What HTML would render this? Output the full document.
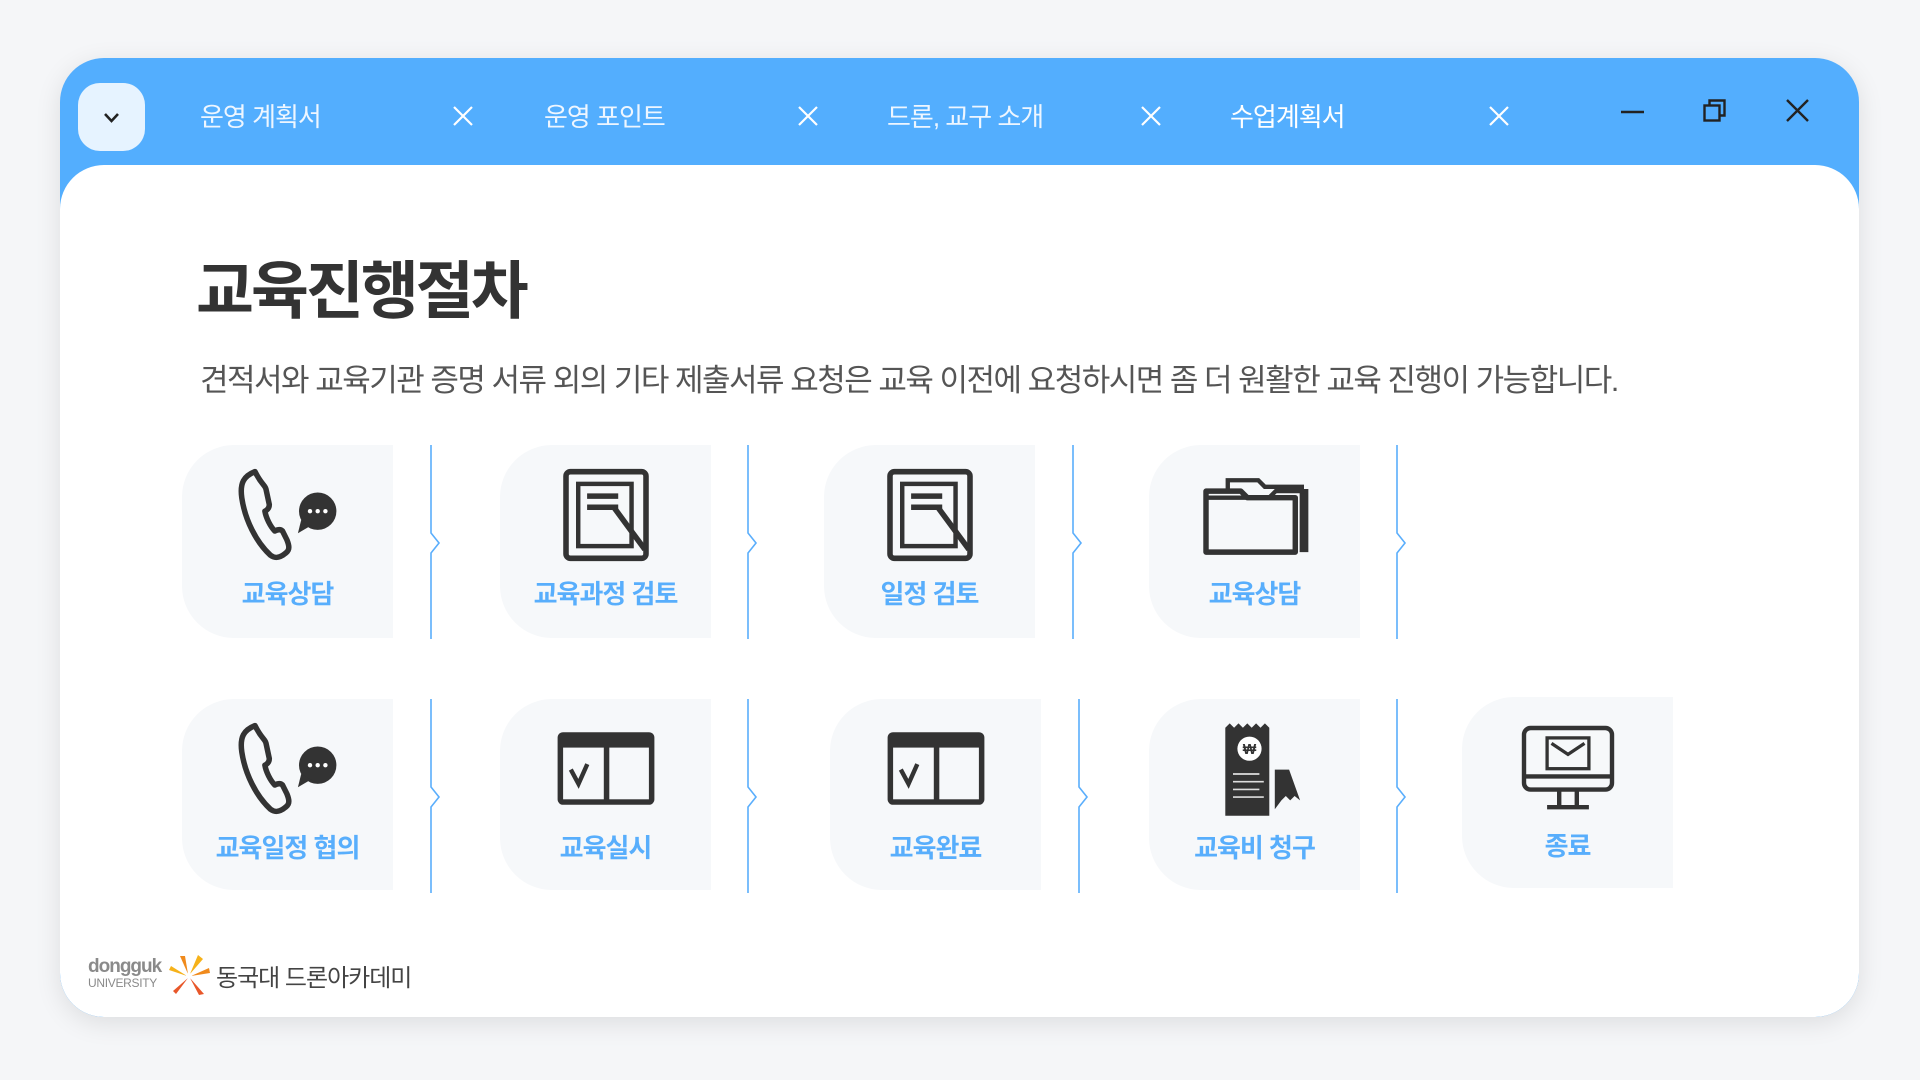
<!DOCTYPE html>
<html><head><meta charset="utf-8"><style>
*{margin:0;padding:0;box-sizing:border-box}
body{width:1920px;height:1080px;background:#f5f6f8;font-family:"Liberation Sans","Noto Sans CJK KR",sans-serif;position:relative;overflow:hidden}
.win{position:absolute;left:60px;top:58px;width:1799px;height:959px;background:#53aefe;border-radius:44px;box-shadow:0 6px 26px rgba(0,0,0,.10);overflow:hidden}
.body{position:absolute;left:0;top:107px;width:1799px;height:852px;background:#fff;border-radius:44px 44px 44px 44px}
.dd{position:absolute;left:18px;top:25px;width:67px;height:68px;border-radius:22px;background:#e6f3ff}
.tab{position:absolute;top:42px;color:#eef6ff;font-size:26px;line-height:34px;letter-spacing:-1px}
.x{position:absolute;top:47px}
.a{position:absolute}
.t{position:absolute;color:#3a3a3a}
.card{position:absolute;width:211px;height:193px;background:#f6f8fa;border-radius:52px 0 0 52px}
.card svg{position:absolute;left:50%;top:20px;transform:translateX(-50%)}
.lbl{position:absolute;left:0;right:0;top:129px;text-align:center;color:#58aefc;font-size:26px;font-weight:bold;letter-spacing:-1px}
</style></head><body>
<div class="win">
 <div class="dd"><svg width="67" height="68" viewBox="0 0 67 68"><path d="M27 31l6.5 7 6.5-7" fill="none" stroke="#222" stroke-width="2.6"/></svg></div>
 <div class="tab" style="left:140px">운영 계획서</div>
 <div class="tab" style="left:484px">운영 포인트</div>
 <div class="tab" style="left:827px">드론, 교구 소개</div>
 <div class="tab" style="left:1170px;color:#fff">수업계획서</div>
 <svg class="x" style="left:392px" width="22" height="22"><path d="M2 2l18 18M20 2L2 20" stroke="#fff" stroke-width="2.2"/></svg>
 <svg class="x" style="left:737px" width="22" height="22"><path d="M2 2l18 18M20 2L2 20" stroke="#fff" stroke-width="2.2"/></svg>
 <svg class="x" style="left:1080px" width="22" height="22"><path d="M2 2l18 18M20 2L2 20" stroke="#fff" stroke-width="2.2"/></svg>
 <svg class="x" style="left:1428px" width="22" height="22"><path d="M2 2l18 18M20 2L2 20" stroke="#fff" stroke-width="2.2"/></svg>
 <svg class="a" style="left:1560px;top:40px" width="30" height="30"><path d="M1 14h23" stroke="#222" stroke-width="2.4"/></svg>
 <svg class="a" style="left:1642px;top:40px" width="30" height="30"><rect x="2.5" y="7.5" width="15" height="15" fill="none" stroke="#222" stroke-width="2.4"/><path d="M7.5 7V2.5h15v15H18" fill="none" stroke="#222" stroke-width="2.4"/></svg>
 <svg class="a" style="left:1725px;top:40px" width="30" height="30"><path d="M2 2l21 21M23 2L2 23" stroke="#222" stroke-width="2.4"/></svg>
 <div class="body">
  <div class="t" style="left:136px;top:76px;font-size:63px;font-weight:bold;letter-spacing:-3px;color:#333">교육진행절차</div>
  <div class="t" style="left:140px;top:190px;font-size:31px;letter-spacing:-1.5px;color:#555">견적서와 교육기관 증명 서류 외의 기타 제출서류 요청은 교육 이전에 요청하시면 좀 더 원활한 교육 진행이 가능합니다.</div>
 </div>
</div>

<!-- row 1 -->
<div class="card" style="left:182px;top:445px"><svg width="110" height="99" viewBox="0 0 100 90"><path d="M20 6c-10 4-14 10-12 24 3 20 13 40 26 52 4 3 8 3 14-2 4-3 3-7 1-12l-4-8c-2-2-5-1-7 0-4-4-8-12-9-18 2-1 4-3 4-6l-3-14c-1-4-4-4-10-16z" fill="none" stroke="#333" stroke-width="5" stroke-linejoin="round"/><circle cx="77" cy="42" r="17" fill="#333"/><path d="M62 50l-3 12 12-7z" fill="#333"/><circle cx="70" cy="42" r="2" fill="#fff"/><circle cx="77" cy="42" r="2" fill="#fff"/><circle cx="84" cy="42" r="2" fill="#fff"/></svg><div class="lbl">교육상담</div></div>
<div class="card" style="left:500px;top:445px"><svg width="100" height="100" viewBox="0 0 90 90"><rect x="9" y="6" width="72" height="78" rx="4" fill="none" stroke="#333" stroke-width="5"/><rect x="20" y="17" width="48" height="56" fill="none" stroke="#333" stroke-width="4"/><path d="M28 28h28M28 38h28" stroke="#333" stroke-width="5"/><path d="M52 38l28 38" stroke="#333" stroke-width="5"/></svg><div class="lbl">교육과정 검토</div></div>
<div class="card" style="left:824px;top:445px"><svg width="100" height="100" viewBox="0 0 90 90"><rect x="9" y="6" width="72" height="78" rx="4" fill="none" stroke="#333" stroke-width="5"/><rect x="20" y="17" width="48" height="56" fill="none" stroke="#333" stroke-width="4"/><path d="M28 28h28M28 38h28" stroke="#333" stroke-width="5"/><path d="M52 38l28 38" stroke="#333" stroke-width="5"/></svg><div class="lbl">일정 검토</div></div>
<div class="card" style="left:1149px;top:445px"><svg width="120" height="98" viewBox="0 0 110 90"><path d="M10 80V24h32l6 6h44v50z" fill="none" stroke="#333" stroke-width="5" stroke-linejoin="round"/><path d="M30 22v-8h28l6 6h34v60" fill="none" stroke="#333" stroke-width="4"/><path d="M10 30h58l6-6h28v56" fill="none" stroke="#333" stroke-width="4"/></svg><div class="lbl">교육상담</div></div>

<!-- row 2 -->
<div class="card" style="left:182px;top:699px;height:191px"><svg width="110" height="99" viewBox="0 0 100 90"><path d="M20 6c-10 4-14 10-12 24 3 20 13 40 26 52 4 3 8 3 14-2 4-3 3-7 1-12l-4-8c-2-2-5-1-7 0-4-4-8-12-9-18 2-1 4-3 4-6l-3-14c-1-4-4-4-10-16z" fill="none" stroke="#333" stroke-width="5" stroke-linejoin="round"/><circle cx="77" cy="42" r="17" fill="#333"/><path d="M62 50l-3 12 12-7z" fill="#333"/><circle cx="70" cy="42" r="2" fill="#fff"/><circle cx="77" cy="42" r="2" fill="#fff"/><circle cx="84" cy="42" r="2" fill="#fff"/></svg><div class="lbl">교육일정 협의</div></div>
<div class="card" style="left:500px;top:699px;height:191px"><svg width="110" height="99" viewBox="0 0 100 90"><rect x="6" y="12" width="88" height="66" rx="5" fill="#333"/><rect x="11" y="26" width="37" height="47" fill="#f6f8fa"/><rect x="53" y="26" width="36" height="47" fill="#f6f8fa"/><path d="M18 46l7 13 8-18" fill="none" stroke="#333" stroke-width="4"/></svg><div class="lbl">교육실시</div></div>
<div class="card" style="left:830px;top:699px;height:191px"><svg width="110" height="99" viewBox="0 0 100 90"><rect x="6" y="12" width="88" height="66" rx="5" fill="#333"/><rect x="11" y="26" width="37" height="47" fill="#f6f8fa"/><rect x="53" y="26" width="36" height="47" fill="#f6f8fa"/><path d="M18 46l7 13 8-18" fill="none" stroke="#333" stroke-width="4"/></svg><div class="lbl">교육완료</div></div>
<div class="card" style="left:1149px;top:699px;height:191px"><svg width="110" height="99" viewBox="0 0 100 90"><path d="M23 8l4-4 4 4 4-4 4 4 4-4 4 4 4-4 4 4 4-4 4 4v80H23z" fill="#333"/><circle cx="45" cy="27" r="11" fill="#fff"/><text x="45" y="32" font-size="13" font-weight="bold" text-anchor="middle" fill="#333" font-family="Liberation Sans,sans-serif">₩</text><path d="M30 50h24M30 57h28M30 64h24M30 71h28" stroke="#ddd" stroke-width="1.5"/><path d="M68 46h13l10 28-5-4-4 4-4-4-4 4-6 8z" fill="#333"/></svg><div class="lbl">교육비 청구</div></div>
<div class="card" style="left:1462px;top:697px;height:191px"><svg width="110" height="99" viewBox="0 0 100 90"><rect x="10" y="10" width="80" height="56" rx="6" fill="none" stroke="#333" stroke-width="4"/><path d="M10 54h80" stroke="#333" stroke-width="4"/><rect x="31" y="19" width="38" height="28" fill="none" stroke="#333" stroke-width="3"/><path d="M35 24l15 10 15-10" fill="none" stroke="#333" stroke-width="3"/><path d="M42 66v16M58 66v16M31 82h38" stroke="#333" stroke-width="4"/></svg><div class="lbl">종료</div></div>

<!-- dividers -->
<svg class="a" style="left:0;top:0" width="1920" height="1080">
<g fill="none" stroke="#5aaefc" stroke-width="1.6">
<path d="M431 445v88l8 10-8 10v86"/><path d="M748 445v88l8 10-8 10v86"/><path d="M1073 445v88l8 10-8 10v86"/><path d="M1397 445v88l8 10-8 10v86"/>
<path d="M431 699v88l8 10-8 10v86"/><path d="M748 699v88l8 10-8 10v86"/><path d="M1079 699v88l8 10-8 10v86"/><path d="M1397 699v88l8 10-8 10v86"/>
</g>
</svg>

<!-- footer -->
<div class="a" style="left:88px;top:957px;color:#8a8a8a;font-size:19px;font-weight:bold;letter-spacing:-1px;line-height:20px">dongguk</div>
<div class="a" style="left:88px;top:976px;color:#8a8a8a;font-size:12px;letter-spacing:-0.3px">UNIVERSITY</div>
<svg class="a" style="left:168px;top:954px" width="44" height="42" viewBox="0 0 44 42"><g fill="#f08a1c"><path d="M20 20L12 2l5 0z"/><path d="M22 20L30 1l5 4z" fill="#f6b21a"/><path d="M23 22l18-8 1 5z"/><path d="M22 24l14 16-5 1z" fill="#e8572a"/><path d="M20 24L8 40l-3-3z" fill="#e8572a"/><path d="M19 22L1 16l2-4z" fill="#f6b21a"/></g><circle cx="21" cy="22" r="3" fill="#fff"/></svg>
<div class="a" style="left:216px;top:958px;color:#444;font-size:24px;letter-spacing:-1px">동국대 드론아카데미</div>
</body></html>
